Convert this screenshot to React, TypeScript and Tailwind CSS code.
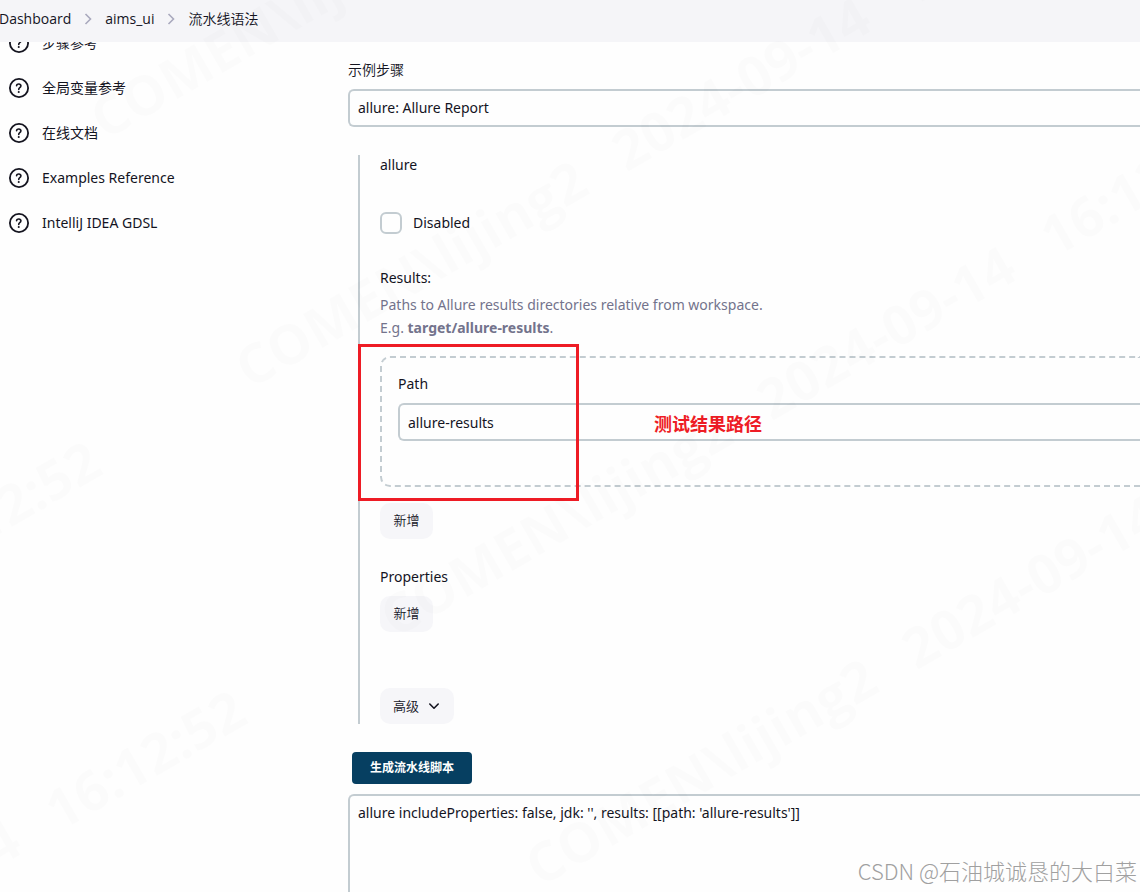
import React from "react";

const helpLinks = ["步骤参考", "全局变量参考", "在线文档", "Examples Reference", "IntelliJ IDEA GDSL"];

function HelpIcon() {
  return (
    <svg viewBox="0 0 512 512" className="size-[22px] shrink-0" fill="none" aria-hidden="true">
      <circle cx="256" cy="256" r="212" stroke="currentColor" strokeWidth="42" />
      <path
        d="M200 202.3s.8-16 17.500-29.500c10-8 22-10.400 32.500-10.500 10-.1 18.900 1.500 24.200 4.100 9.100 4.500 26.800 15.300 26.800 38.300 0 24.200-15.600 35.200-33.300 47.300S250 272 250 292"
        stroke="currentColor"
        strokeWidth="38"
        strokeLinecap="round"
      />
      <circle cx="250" cy="350" r="24" fill="currentColor" />
    </svg>
  );
}

function Crumb() {
  return (
    <svg viewBox="0 0 8 12" className="mx-[13px] h-3 w-2 shrink-0" fill="none" aria-hidden="true">
      <path d="M1.500 1l5 5-5 5" stroke="#a9a9bd" strokeWidth="1.600" />
    </svg>
  );
}

function AddButton() {
  return (
    <button type="button" className="h-9 w-[53px] rounded-[10px] bg-[#f6f6f9] pb-0.5 text-center text-[13px] font-[350]">
      新增
    </button>
  );
}

function Mark({ place }: { place: string }) {
  return (
    <div
      className={`absolute flex origin-bottom-left -rotate-30 gap-10 font-['Open_Sans'] text-[55px] leading-[54px] font-bold whitespace-nowrap text-black/[0.013] ${place}`}
    >
      <span>COMEN\lijing2</span>
      <span>2024-09-14</span>
      <span>16:12:52</span>
    </div>
  );
}

function Watermark() {
  return (
    <div aria-hidden="true" className="pointer-events-none absolute inset-0 z-20 overflow-hidden select-none">
      <Mark place="left-[108px] top-[92px]" />
      <Mark place="left-[253px] top-[341px]" />
      <Mark place="left-[398px] top-[590px]" />
      <Mark place="left-[543px] top-[839px]" />
      <Mark place="left-[-742px] top-[915px]" />
      <Mark place="left-[-597px] top-[1164px]" />
    </div>
  );
}

export default function App() {
  return (
    <div className="relative flex min-h-screen flex-col overflow-hidden bg-[#fefefe] font-['Noto_Sans','Noto_Sans_CJK_SC',sans-serif] text-sm leading-5 text-[#14141f]">
      <header className="z-10 flex h-[42px] items-center bg-[#f5f5f8] pb-1 font-['Open_Sans','Noto_Sans_CJK_SC',sans-serif]">
        <nav aria-label="Breadcrumb" className="-ml-px flex items-center">
          <a href="#dashboard">Dashboard</a>
          <Crumb />
          <a href="#aims_ui">aims_ui</a>
          <Crumb />
          <a href="#syntax" className="font-[350]">流水线语法</a>
        </nav>
      </header>

      <div className="flex grow">
        <aside className="-mt-[15px] flex w-[348px] shrink-0 flex-col gap-[13px] pl-2">
          {helpLinks.map((label) => (
            <a key={label} href="#help" className="flex h-8 items-center gap-3">
              <HelpIcon />
              {label}
            </a>
          ))}
        </aside>

        <main className="flex min-w-0 grow flex-col pt-[18px]">
          <label htmlFor="step" className="font-[350]">示例步骤</label>
          <select
            id="step"
            className="mt-[9px] h-[38px] w-full appearance-none rounded-l-md border-2 border-r-0 border-[#c3ccd1] bg-[#fefefe] px-2"
          >
            <option>allure: Allure Report</option>
          </select>

          <section className="relative mt-7 ml-[10px] flex flex-col items-start border-l-2 border-[#c3ccd1] pl-5">
            <div>allure</div>
            <label className="mt-[37px] flex items-center gap-[11px]">
              <input
                type="checkbox"
                className="size-[22px] appearance-none rounded-md border-2 border-[#c3ccd1] bg-[#fefefe]"
              />
              Disabled
            </label>
            <div className="mt-[34px]">Results:</div>
            <p className="mt-[5px] leading-[23px] text-[#73738c]">
              Paths to Allure results directories relative from workspace.
              <br />
              E.g. <strong className="font-bold">target/allure-results</strong>.
            </p>

            <div className="mt-[17px] h-[131px] w-full rounded-l-[10px] border-2 border-r-0 border-dashed border-[#c3ccd1] pt-4 pl-4">
              <label htmlFor="path" className="block">
                Path
              </label>
              <input
                id="path"
                defaultValue="allure-results"
                className="mt-[9px] h-[38px] w-full rounded-l-md border-2 border-r-0 border-[#c3ccd1] bg-[#fefefe] px-2"
              />
            </div>
            <div className="mt-4">
              <AddButton />
            </div>

            <div className="mt-7">Properties</div>
            <div className="mt-[9px]">
              <AddButton />
            </div>

            <button
              type="button"
              className="mt-14 flex h-9 items-center gap-2 rounded-[10px] bg-[#f6f6f9] px-[13px] text-[13px] font-[350]"
            >
              高级
              <svg viewBox="0 0 14 14" className="size-[14px]" fill="none" aria-hidden="true">
                <path
                  d="M2.800 5l4.200 4.200L11.200 5"
                  stroke="currentColor"
                  strokeWidth="1.600"
                  strokeLinecap="round"
                  strokeLinejoin="round"
                />
              </svg>
            </button>

            <div className="pointer-events-none absolute top-[189px] -left-[2px] h-[157px] w-[221px] border-3 border-[#ee1c25]" />
            <div className="pointer-events-none absolute top-[257px] left-[294px] text-lg leading-6 font-bold text-[#ee1c25]">
              测试结果路径
            </div>
          </section>

          <button
            type="button"
            className="mt-7 ml-1 h-8 self-start rounded bg-[#063f61] px-[18px] text-xs font-bold text-white"
          >
            生成流水线脚本
          </button>
          <textarea
            aria-label="生成流水线脚本"
            defaultValue="allure includeProperties: false, jdk: '', results: [[path: 'allure-results']]"
            className="mt-[10px] min-h-[97px] w-full grow resize-none rounded-tl-md border-2 border-r-0 border-b-0 border-[#c3ccd1] bg-[#fefefe] px-2 py-[7px]"
          />
        </main>
      </div>

      <Watermark />
      <div className="absolute right-[3px] bottom-2 z-30 font-['Noto_Sans_CJK_SC',sans-serif] text-[22px] leading-7 font-light text-[#a0a0a0]">
        CSDN @石油城诚恳的大白菜
      </div>
    </div>
  );
}
